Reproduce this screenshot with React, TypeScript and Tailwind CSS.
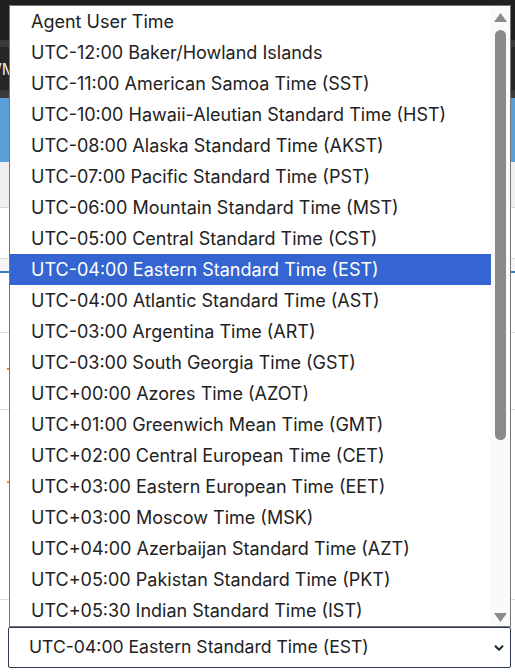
import { ChevronDown } from "lucide-react";

const OPTIONS = [
  "Agent User Time",
  "UTC-12:00 Baker/Howland Islands",
  "UTC-11:00 American Samoa Time (SST)",
  "UTC-10:00 Hawaii-Aleutian Standard Time (HST)",
  "UTC-08:00 Alaska Standard Time (AKST)",
  "UTC-07:00 Pacific Standard Time (PST)",
  "UTC-06:00 Mountain Standard Time (MST)",
  "UTC-05:00 Central Standard Time (CST)",
  "UTC-04:00 Eastern Standard Time (EST)",
  "UTC-04:00 Atlantic Standard Time (AST)",
  "UTC-03:00 Argentina Time (ART)",
  "UTC-03:00 South Georgia Time (GST)",
  "UTC+00:00 Azores Time (AZOT)",
  "UTC+01:00 Greenwich Mean Time (GMT)",
  "UTC+02:00 Central European Time (CET)",
  "UTC+03:00 Eastern European Time (EET)",
  "UTC+03:00 Moscow Time (MSK)",
  "UTC+04:00 Azerbaijan Standard Time (AZT)",
  "UTC+05:00 Pakistan Standard Time (PKT)",
  "UTC+05:30 Indian Standard Time (IST)",
];

const SELECTED = "UTC-04:00 Eastern Standard Time (EST)";

export default function App() {
  return (
    <div className="relative w-[515px] h-[672px] overflow-hidden bg-white font-['Inter',sans-serif]">
      {/* page behind the open dropdown */}
      <div className="flex flex-col">
        <div className="h-[40px] bg-[#1f1f1f]" />
        <div className="h-[7px] bg-[#3a3a3a]" />
        <div className="h-[43px] bg-[#262626] flex items-center">
          <span className="-ml-[4px] text-[16px] text-[#e8e8e8]">/M</span>
        </div>
        <div className="h-[8px] bg-[#3a3a3a]" />
        <div className="h-[64px] bg-[#5a9fd8]" />
        <div className="h-[46px] bg-[#f0f0f0] border-b border-[#d6d6d6]" />
        <div className="h-[50px] bg-white" />
        <div className="h-[15px] bg-[#f5f5f5] border-t border-[#dcdcdc] border-b-2 border-b-[#3a78c8]" />
        <div className="h-[60px] bg-white border-b border-[#dcdcdc]" />
        <div className="h-[77px] bg-white border-b border-[#dcdcdc] relative">
          <span className="absolute left-[7px] top-[35px] w-[2px] h-[2px] bg-[#e08a3a]" />
        </div>
        <div className="h-[190px] bg-white border-b border-[#dcdcdc] relative">
          <span className="absolute left-[7px] top-[71px] w-[2px] h-[2px] bg-[#e08a3a]" />
        </div>
      </div>

      {/* open option list */}
      <div className="absolute left-[9px] top-[5px] w-[502px] h-[622px] border border-[#767676] bg-white flex">
        <ul className="flex-1 flex flex-col">
          {OPTIONS.map((opt, i) => (
            <li
              key={opt + i}
              className={`h-[31px] shrink-0 flex items-center pl-[21px] text-[18px] whitespace-nowrap ${
                opt === SELECTED && i === 8 ? "bg-[#3465d0] text-white" : "text-[#222222]"
              }`}
            >
              {opt}
            </li>
          ))}
        </ul>
        <div className="relative w-[19px] bg-[#fafafa]">
          <svg className="absolute left-[3px] top-[7px]" width="13" height="9" viewBox="0 0 13 9">
            <polygon points="6.5,0 13,9 0,9" fill="#8a8a8a" />
          </svg>
          <div className="absolute left-[4px] top-[24px] w-[11px] h-[410px] rounded-full bg-[#8a8a8a]" />
          <svg className="absolute left-[3px] top-[607px]" width="13" height="9" viewBox="0 0 13 9">
            <polygon points="0,0 13,0 6.5,9" fill="#8a8a8a" />
          </svg>
        </div>
      </div>

      {/* the select itself */}
      <div className="absolute left-[8px] top-[627px] w-[503px] h-[41px] border border-[#2b3a4f] rounded-[2px] bg-white flex items-center justify-between pl-[20px] pr-[4px]">
        <span className="text-[17.6px] text-[#222222] whitespace-nowrap">{SELECTED}</span>
        <ChevronDown className="w-[14px] h-[14px] text-[#1f2937]" strokeWidth={3.5} />
      </div>
    </div>
  );
}
